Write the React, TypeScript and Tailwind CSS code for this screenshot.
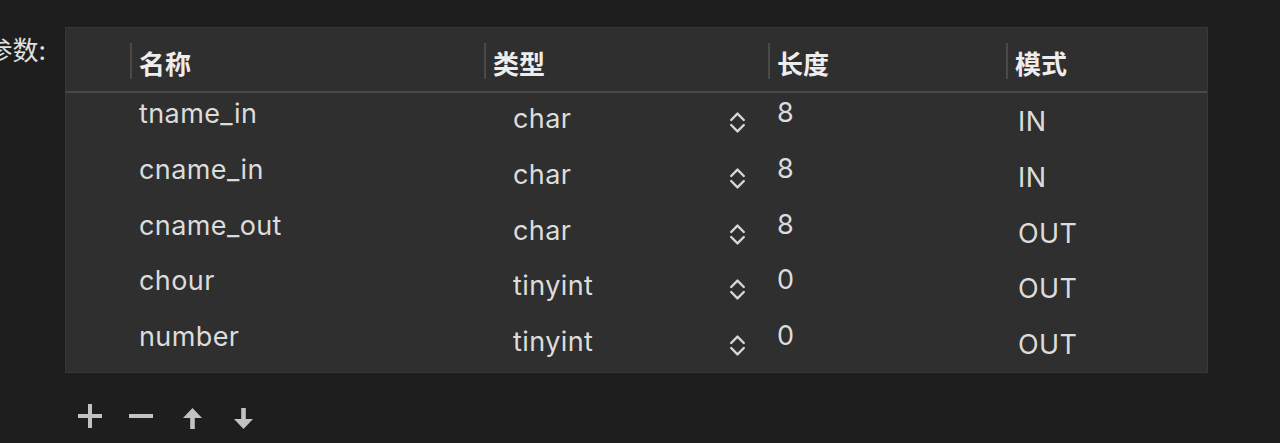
import { FC } from "react";

const params = [
  { name: "tname_in", type: "char", length: "8", mode: "IN" },
  { name: "cname_in", type: "char", length: "8", mode: "IN" },
  { name: "cname_out", type: "char", length: "8", mode: "OUT" },
  { name: "chour", type: "tinyint", length: "0", mode: "OUT" },
  { name: "number", type: "tinyint", length: "0", mode: "OUT" },
];

const headers = ["名称", "类型", "长度", "模式"];

const Stepper: FC = (): JSX.Element => (
  <svg width="17" height="25" viewBox="0 0 17 25" fill="none">
    <path
      d="M2.2 10 L8.5 3.6 L14.8 10"
      stroke="#d6d6d6"
      strokeWidth="2.4"
      strokeLinecap="round"
      strokeLinejoin="round"
    />
    <path
      d="M2.2 15 L8.5 21.4 L14.8 15"
      stroke="#d6d6d6"
      strokeWidth="2.4"
      strokeLinecap="round"
      strokeLinejoin="round"
    />
  </svg>
);

const App: FC = (): JSX.Element => {
  return (
    <div className="w-[1280px] h-[443px] overflow-hidden bg-[#1e1e1e] font-['Inter','Noto_Sans_CJK_SC',sans-serif] text-[27px] tracking-[0.4px] text-[#dcdcdc]">
      <div className="flex items-start pt-[27px]">
        {/* label, cut off by the window edge */}
        <div className="w-[65px] shrink-0 flex justify-end pr-[19px] pt-[8px]">
          <span className="whitespace-nowrap leading-[32px] text-[26px] tracking-normal text-[#e0e0e0]">参数:</span>
        </div>

        <div className="w-[1143px] border border-[#373737] bg-[#2f2f2f]">
          {/* header */}
          <div className="grid grid-cols-[64px_354px_284px_238px_1fr] h-[65px] border-b-2 border-[#484848]">
            <div />
            {headers.map((h) => (
              <div key={h} className="flex items-start">
                <div className="mt-[15px] h-[36px] w-[2px] bg-[#4a4a4a]" />
                <span className="ml-[7px] mt-[21px] leading-[32px] text-[26px] tracking-normal font-semibold text-[#ededed]">
                  {h}
                </span>
              </div>
            ))}
          </div>

          {/* rows */}
          {params.map((p) => (
            <div
              key={p.name}
              className="grid grid-cols-[64px_354px_284px_238px_1fr] h-[55.8px]"
            >
              <div />
              <div className="pl-[9px] pt-[5px] leading-[32px]">{p.name}</div>
              <div className="flex items-start">
                <span className="pl-[29px] pt-[10px] leading-[32px] w-[245px]">
                  {p.type}
                </span>
                <span className="pt-[17px]">
                  <Stepper />
                </span>
              </div>
              <div className="pl-[9px] pt-[4px] leading-[32px]">{p.length}</div>
              <div className="pl-[12px] pt-[13px] leading-[32px]">{p.mode}</div>
            </div>
          ))}
        </div>
      </div>

      {/* toolbar */}
      <div className="flex items-center pl-[78px] mt-[31px] gap-[27px]">
        <svg width="24" height="24" viewBox="0 0 24 24">
          <rect x="10" y="0" width="4" height="24" fill="#c2c2c2" />
          <rect x="0" y="10" width="24" height="4" fill="#c2c2c2" />
        </svg>
        <svg width="24" height="24" viewBox="0 0 24 24">
          <rect x="0" y="10" width="24" height="4" fill="#c2c2c2" />
        </svg>
        <svg width="19" height="21" viewBox="0 0 19 21" className="ml-[3px] mt-[4px]">
          <path d="M9.5 0 L19 10 L0 10 Z" fill="#c2c2c2" />
          <rect x="7.2" y="9" width="4.6" height="12" fill="#c2c2c2" />
        </svg>
        <svg width="19" height="21" viewBox="0 0 19 21" className="ml-[5px] mt-[4px]">
          <rect x="7.2" y="0" width="4.6" height="12" fill="#c2c2c2" />
          <path d="M9.5 21 L19 11 L0 11 Z" fill="#c2c2c2" />
        </svg>
      </div>
    </div>
  );
};

export default App;
